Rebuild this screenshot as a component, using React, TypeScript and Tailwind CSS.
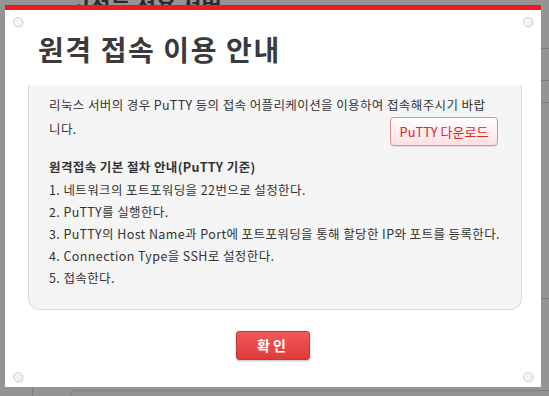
import React from "react"

const steps = [
  "1. 네트워크의 포트포워딩을 22번으로 설정한다.",
  "2. PuTTY를 실행한다.",
  "3. PuTTY의 Host Name과 Port에 포트포워딩을 통해 할당한 IP와 포트를 등록한다.",
  "4. Connection Type을 SSH로 설정한다.",
  "5. 접속한다.",
]

function Dot({ className }: { className: string }) {
  return (
    <div
      className={`absolute w-[10px] h-[10px] rounded-full border border-[#d4d4d4] bg-[#f4f4f4] shadow-[1px_1px_1px_rgba(0,0,0,0.08)] ${className}`}
    ></div>
  )
}

export default function App() {
  return (
    <div
      className="w-[549px] h-[396px] overflow-hidden bg-[#949494] relative"
      style={{ fontFamily: "'Noto Sans CJK KR', 'Noto Sans', sans-serif" }}
    >
      {/* page behind */}
      <div className="absolute left-[70px] -top-[12px] text-[22px] font-bold text-[#2a2a2a]">고성능 전용 서버</div>
      <div className="absolute right-0 top-[48px] w-[8px] h-px bg-[#7d7d7d]"></div>
      <div className="absolute right-0 top-[80px] w-[8px] h-px bg-[#7d7d7d]"></div>
      <div className="absolute right-0 top-[102px] w-[8px] h-px bg-[#7d7d7d]"></div>
      <div className="absolute right-0 top-[298px] w-[8px] h-px bg-[#7d7d7d]"></div>
      <div className="absolute left-[32px] bottom-0 w-px h-[9px] bg-[#7d7d7d]"></div>
      <div className="absolute left-[70px] bottom-[-6px] w-[480px] h-[12px] rounded-tl-[6px] border-l border-t border-[#7d7d7d]"></div>

      {/* modal */}
      <div className="relative ml-[5px] mt-[5px] w-[536px] h-[382px] bg-white flex flex-col">
        <div className="h-[5px] bg-[#ed1c24]"></div>
        <Dot className="left-[8px] top-[12px]" />
        <Dot className="right-[8px] top-[12px]" />
        <Dot className="left-[8px] bottom-[5px]" />
        <Dot className="right-[8px] bottom-[5px]" />

        <h1 className="pl-[33px] pt-[19px] text-[28px] leading-[40px] font-bold text-[#3a3a3a] tracking-[1.6px]">
          원격 접속 이용 안내
        </h1>

        <div className="ml-[23px] mt-[16px] w-[494px] h-[225px] bg-[#f5f5f5] border-x border-b border-[#dcdcdc] rounded-b-[12px] pl-[20px] pr-[16px] pt-[8px] text-[12.5px] text-[#333] tracking-[0.4px]">
          <p className="leading-[24px]">리눅스 서버의 경우 PuTTY 등의 접속 어플리케이션을 이용하여 접속해주시기 바랍</p>
          <div className="flex justify-between items-start pr-[7px]">
            <p className="leading-[24px]">니다.</p>
            <button className="w-[108px] h-[29px] rounded-[4px] border border-[#f08a8a] bg-gradient-to-b from-white to-[#fde0e0] text-[13px] tracking-normal text-[#e0262c] shadow-[0_1px_1px_rgba(0,0,0,0.1)]">
              PuTTY 다운로드
            </button>
          </div>
          <p className="mt-[10px] font-bold leading-[22px]">원격접속 기본 절차 안내(PuTTY 기준)</p>
          <div className="flex flex-col mt-[1px]">
            {steps.map((s) => (
              <p key={s} className="leading-[22px]">
                {s}
              </p>
            ))}
          </div>
        </div>

        <div className="flex justify-center mt-[21px]">
          <button className="w-[74px] h-[29px] rounded-[3px] border border-[#c93434] bg-gradient-to-b from-[#f25858] to-[#e03b3b] text-white text-[14px] font-bold tracking-[3px] shadow-[0_1px_2px_rgba(0,0,0,0.25)]">
            확인
          </button>
        </div>
      </div>
    </div>
  )
}
